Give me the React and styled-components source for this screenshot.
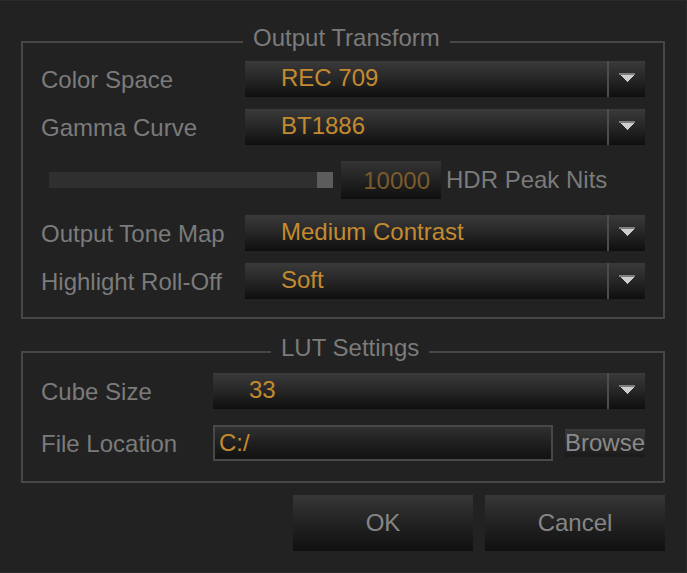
import React from "react";
import styled, { createGlobalStyle } from "styled-components";

const Global = createGlobalStyle`
  html, body { margin: 0; padding: 0; background: #222222; }
  body { font-family: "Liberation Sans", Arial, sans-serif; }
  * { box-sizing: border-box; }
`;

const Window = styled.div`
  width: 687px;
  height: 573px;
  background: #222222;
  border-top: 1px solid #2b2b2b;
  border-right: 1px solid #2b2b2b;
  border-bottom: 1px solid #2b2b2b;
  padding: 0 21px 0 21px;
  display: flex;
  flex-direction: column;
  font-size: 24px;
  color: #7b7b7b;
`;

const Group = styled.fieldset`
  margin: ${(p) => p.$mt}px 0 0 0;
  min-width: 0;
  border: 2px solid #474747;
  padding: ${(p) => p.$pt}px 18px ${(p) => p.$pb}px 18px;
`;

const Legend = styled.legend`
  margin-left: ${(p) => p.$left}px;
  padding: 1px 10px 9px 10px;
  line-height: 27px;
  font-size: 24px;
  color: #7b7b7b;
`;

const Rows = styled.div`
  display: flex;
  flex-direction: column;
  gap: ${(p) => p.$gap}px;
`;

const Row = styled.div`
  display: flex;
  align-items: center;
  height: 36px;
`;

const Label = styled.div`
  width: ${(p) => p.$w}px;
  flex: none;
  white-space: nowrap;
  padding-top: 2px;
  color: #7b7b7b;
`;

const Select = styled.div`
  flex: 1;
  height: 36px;
  display: flex;
  align-items: stretch;
  background: linear-gradient(#3a3a3a, #262626 50%, #0e0e0e);
`;

const SelectValue = styled.div`
  flex: 1;
  display: flex;
  align-items: center;
  padding: 0 0 3px 36px;
  color: #c48a2f;
  white-space: nowrap;
`;

const Divider = styled.div`
  width: 2px;
  background: #4c4c4c;
`;

const ArrowBox = styled.div`
  width: 36px;
  display: flex;
  align-items: center;
  justify-content: center;
  padding-bottom: 3px;
`;

const SliderRow = styled.div`
  display: flex;
  align-items: center;
  padding: 4px 0 4px 8px;
`;

const Track = styled.div`
  width: 284px;
  height: 16px;
  background: #2f2f2f;
  display: flex;
  justify-content: flex-end;
`;

const Thumb = styled.div`
  width: 16px;
  height: 16px;
  background: #5c5c5c;
`;

const NumberBox = styled.div`
  width: 100px;
  height: 38px;
  margin-left: 8px;
  display: flex;
  align-items: center;
  justify-content: flex-end;
  padding: 1px 11px 0 0;
  color: #7a5b2c;
  background: linear-gradient(#343434, #222222 50%, #0f0f0f);
`;

const SideText = styled.div`
  margin-left: 5px;
  white-space: nowrap;
`;

const TextInput = styled.div`
  width: 340px;
  height: 36px;
  border: 2px solid #484848;
  display: flex;
  align-items: center;
  padding-left: 4px;
  color: #c48a2f;
  background: linear-gradient(#303030, #1f1f1f 50%, #111111);
`;

const SmallButton = styled.div`
  margin-left: 12px;
  height: 28px;
  display: flex;
  align-items: center;
  color: #8a8a8a;
  background: linear-gradient(#3a3a3a, #1a1a1a);
`;

const ButtonBar = styled.div`
  margin-top: 12px;
  display: flex;
  justify-content: flex-end;
  gap: 12px;
`;

const Button = styled.div`
  width: 180px;
  height: 56px;
  display: flex;
  align-items: center;
  justify-content: center;
  color: #868686;
  background: linear-gradient(#373737, #222222 50%, #101010);
`;

const Arrow = () => (
  <svg width="16" height="10" viewBox="0 0 16 10" shapeRendering="crispEdges">
    <rect x="0" y="0" width="16" height="2" fill="#7e7e7e" />
    <polygon points="1,2 15,2 8,9" fill="#cdcdcd" />
  </svg>
);

const Dropdown = ({ value }) => (
  <Select>
    <SelectValue>{value}</SelectValue>
    <Divider />
    <ArrowBox>
      <Arrow />
    </ArrowBox>
  </Select>
);

export default function App() {
  return (
    <>
      <Global />
      <Window>
        <Group $mt={22} $pt={1} $pb={18}>
          <Legend $left={202}>Output Transform</Legend>
          <Rows $gap={12}>
            <Row>
              <Label $w={204}>Color Space</Label>
              <Dropdown value="REC 709" />
            </Row>
            <Row>
              <Label $w={204}>Gamma Curve</Label>
              <Dropdown value="BT1886" />
            </Row>
            <SliderRow>
              <Track>
                <Thumb />
              </Track>
              <NumberBox>10000</NumberBox>
              <SideText>HDR Peak Nits</SideText>
            </SliderRow>
            <Row>
              <Label $w={204}>Output Tone Map</Label>
              <Dropdown value="Medium Contrast" />
            </Row>
            <Row>
              <Label $w={204}>Highlight Roll-Off</Label>
              <Dropdown value="Soft" />
            </Row>
          </Rows>
        </Group>
        <Group $mt={14} $pt={3} $pb={20}>
          <Legend $left={230}>LUT Settings</Legend>
          <Rows $gap={16}>
            <Row>
              <Label $w={172}>Cube Size</Label>
              <Dropdown value="33" />
            </Row>
            <Row>
              <Label $w={172}>File Location</Label>
              <TextInput>C:/</TextInput>
              <SmallButton>Browse</SmallButton>
            </Row>
          </Rows>
        </Group>
        <ButtonBar>
          <Button>OK</Button>
          <Button>Cancel</Button>
        </ButtonBar>
      </Window>
    </>
  );
}
